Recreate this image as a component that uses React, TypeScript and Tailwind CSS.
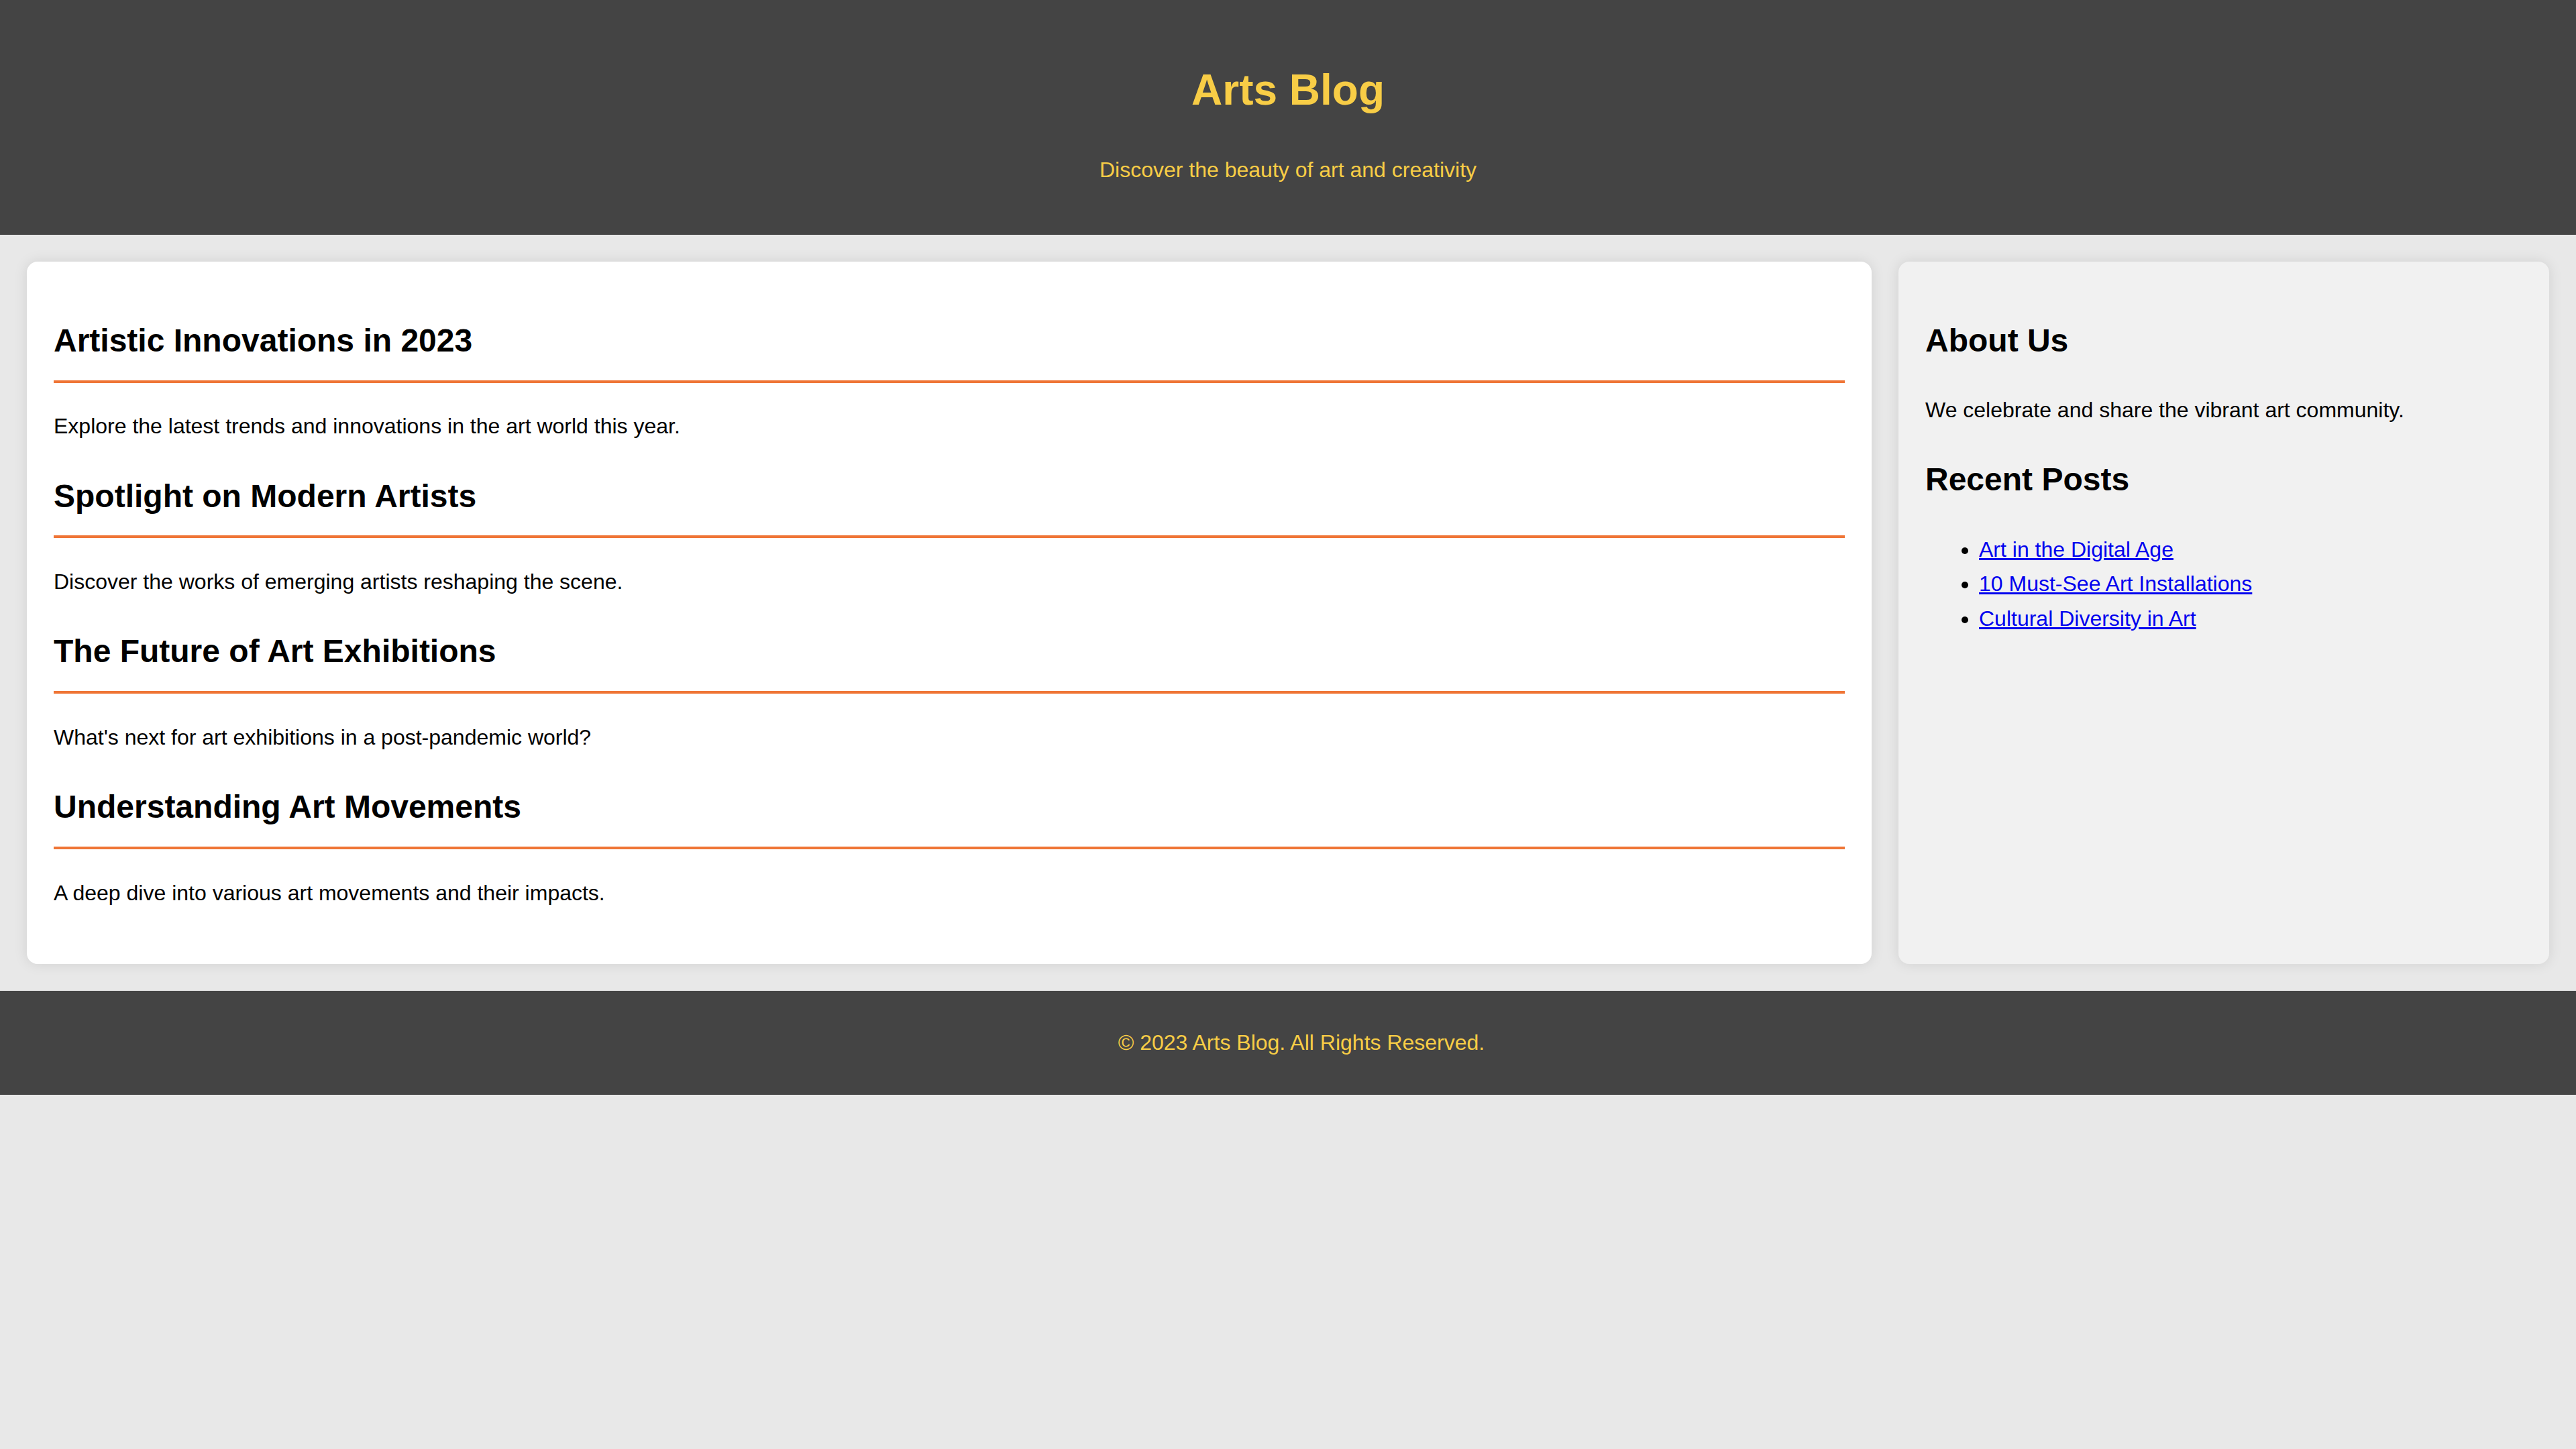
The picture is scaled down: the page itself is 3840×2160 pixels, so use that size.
const posts = [
	{ title: "Artistic Innovations in 2023", text: "Explore the latest trends and innovations in the art world this year." },
	{ title: "Spotlight on Modern Artists", text: "Discover the works of emerging artists reshaping the scene." },
	{ title: "The Future of Art Exhibitions", text: "What's next for art exhibitions in a post-pandemic world?" },
	{ title: "Understanding Art Movements", text: "A deep dive into various art movements and their impacts." },
];

const recent = ["Art in the Digital Age", "10 Must-See Art Installations", "Cultural Diversity in Art"];

export default function App() {
	return (
		<div className="min-h-screen bg-[#e8e8e8] text-black text-[32px] leading-[51.2px] font-['Liberation_Sans',Arial,sans-serif]">
			<header className="h-[350px] bg-[#444444] text-[#f8cd46] text-center pt-[40px]">
				<h1 className="mt-[42.88px] text-[64px] leading-[102.4px] font-bold">Arts Blog</h1>
				<p className="mt-[43px]">Discover the beauty of art and creativity</p>
			</header>

			<main className="flex gap-[40px] p-[40px]">
				<section className="flex-[3_3_0%] bg-white rounded-[16px] p-[40px] shadow-[0_0_20px_rgba(0,0,0,0.1)]">
					{posts.map(({ title, text }) => (
						<article className="mb-[40px]" key={title}>
							<h2 className="my-[39.84px] text-[48px] leading-[76.8px] font-bold pb-[20px] border-b-4 border-[#ef7536]">
								{title}
							</h2>
							<p className="my-[32px]">{text}</p>
						</article>
					))}
				</section>

				<aside className="flex-[1_1_0%] bg-[#f1f1f1] rounded-[16px] p-[40px] shadow-[0_0_20px_rgba(0,0,0,0.1)]">
					<h2 className="my-[39.84px] text-[48px] leading-[76.8px] font-bold">About Us</h2>
					<p className="my-[32px]">We celebrate and share the vibrant art community.</p>
					<h2 className="my-[39.84px] text-[48px] leading-[76.8px] font-bold">Recent Posts</h2>
					<ul className="my-[32px] pl-[80px] list-disc">
						{recent.map((name) => (
							<li key={name}>
								<a href="#" className="text-[#0000ee] underline">
									{name}
								</a>
							</li>
						))}
					</ul>
				</aside>
			</main>

			{/* footer text sits a little right of centre, as in the reference */}
			<footer className="bg-[#444444] text-[#f8cd46] text-center py-[20px] pl-[40px]">
				<p className="my-[32px]">© 2023 Arts Blog. All Rights Reserved.</p>
			</footer>
		</div>
	);
}
